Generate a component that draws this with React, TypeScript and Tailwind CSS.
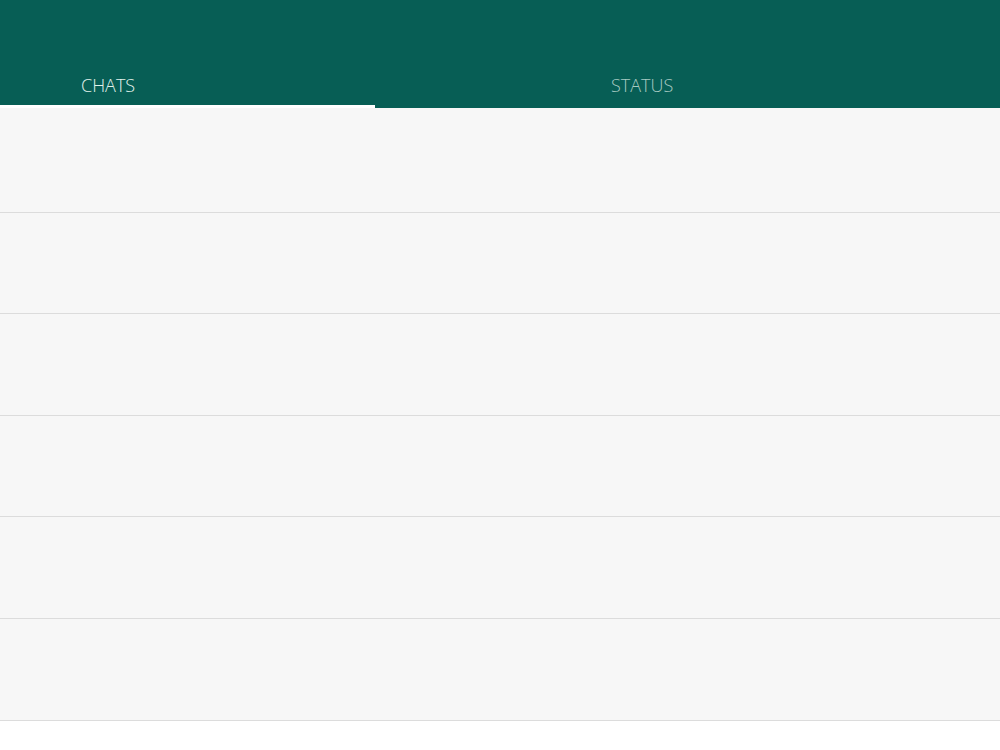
export default function App() {
  const rows = Array(6).fill(0)

  return (
    <div className="w-[1000px] h-[750px] bg-white" style={{ fontFamily: '"Open Sans", "Noto Sans", sans-serif' }}>
      {/* top bar with tabs */}
      <div className="h-[108px] bg-[#075e55] flex items-end">
        <div className="w-[375px] h-[35px] flex flex-col justify-between">
          <div className="pl-[81px] text-[18px] leading-[24px] font-light text-[#e2f2ec]">CHATS</div>
          <div className="h-[3px] bg-white" />
        </div>
        <div className="flex-1 h-[35px]">
          <div className="pl-[236px] text-[18px] leading-[24px] font-light text-[#a8cac2]">STATUS</div>
        </div>
      </div>

      {/* chat list */}
      <div className="bg-[#f7f7f7] pt-[3px]">
        {rows.map((_, i) => (
          <div key={i} className="h-[101.6px] border-b border-[#dcdcdc]" />
        ))}
      </div>
    </div>
  )
}
